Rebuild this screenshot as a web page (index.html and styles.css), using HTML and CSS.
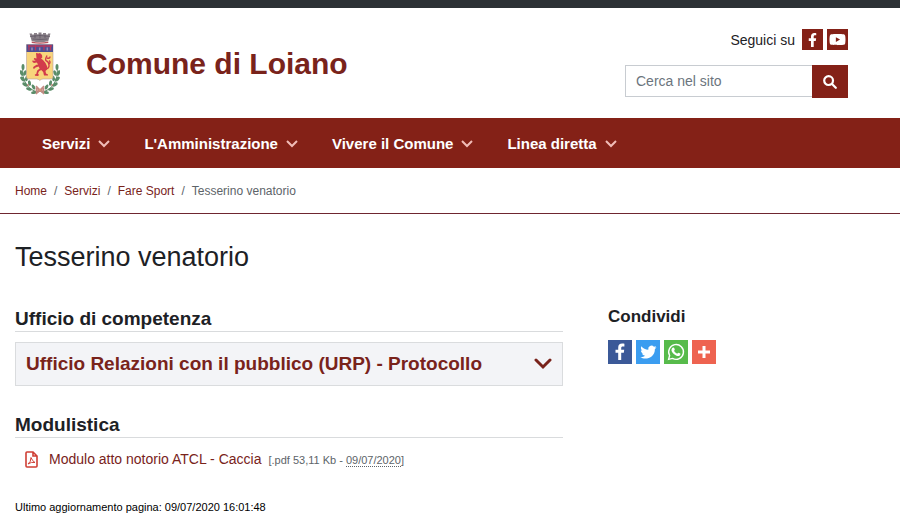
FILE: index.html
```html
<!DOCTYPE html>
<html lang="it">
<head>
<meta charset="utf-8">
<meta name="viewport" content="width=device-width, initial-scale=1">
<title>Tesserino venatorio - Comune di Loiano</title>
<link rel="stylesheet" href="styles.css">
</head>
<body>
<div class="topbar"></div>
<header class="header">
  <a class="brand" href="#">
    <svg class="crest" viewBox="0 0 40 64" aria-hidden="true">
      <g fill="none" stroke="#5d8a68" stroke-width="1">
        <path d="M3 35C1 48 8 59 19 60M37 35C39 48 32 59 21 60"/>
      </g>
      <g fill="#5a8d69">
        <ellipse cx="3" cy="35" rx="1.5" ry="3"/><ellipse cx="1.6" cy="41" rx="1.6" ry="3" transform="rotate(-25 1.6 41)"/>
        <ellipse cx="5" cy="41" rx="1.5" ry="2.8" transform="rotate(25 5 41)"/><ellipse cx="2.6" cy="47" rx="1.6" ry="3" transform="rotate(-45 2.6 47)"/>
        <ellipse cx="6.5" cy="46.5" rx="1.5" ry="2.8" transform="rotate(10 6.5 46.5)"/><ellipse cx="5" cy="52.5" rx="1.6" ry="3" transform="rotate(-60 5 52.5)"/>
        <ellipse cx="9.5" cy="51" rx="1.5" ry="2.8" transform="rotate(-10 9.5 51)"/><ellipse cx="9" cy="57" rx="1.6" ry="3" transform="rotate(-75 9 57)"/>
        <ellipse cx="13.5" cy="55" rx="1.5" ry="2.8" transform="rotate(-30 13.5 55)"/><ellipse cx="14" cy="60.5" rx="1.5" ry="3" transform="rotate(80 14 60.5)"/>
        <ellipse cx="37" cy="35" rx="1.5" ry="3"/><ellipse cx="38.4" cy="41" rx="1.6" ry="3" transform="rotate(25 38.4 41)"/>
        <ellipse cx="35" cy="41" rx="1.5" ry="2.8" transform="rotate(-25 35 41)"/><ellipse cx="37.4" cy="47" rx="1.6" ry="3" transform="rotate(45 37.4 47)"/>
        <ellipse cx="33.5" cy="46.5" rx="1.5" ry="2.8" transform="rotate(-10 33.5 46.5)"/><ellipse cx="35" cy="52.5" rx="1.6" ry="3" transform="rotate(60 35 52.5)"/>
        <ellipse cx="30.5" cy="51" rx="1.5" ry="2.8" transform="rotate(10 30.5 51)"/><ellipse cx="31" cy="57" rx="1.6" ry="3" transform="rotate(75 31 57)"/>
        <ellipse cx="26.5" cy="55" rx="1.5" ry="2.8" transform="rotate(30 26.5 55)"/><ellipse cx="26" cy="60.5" rx="1.5" ry="3" transform="rotate(-80 26 60.5)"/>
      </g>
      <path d="M6.500 12.500h26.500v32.500q0 2-2 2h-8q-2 0-3.200 1.500Q18.500 47 16.500 47h-8q-2 0-2-2z" fill="#f8d57c" stroke="#b9a0a0" stroke-width=".6"/>
      <path d="M6.500 12.500h26.500v7.500H6.500z" fill="#4c4f94"/>
      <path d="M8 14h24M9 13v5.500M15.500 13v5.500M24 13v5.500M30.500 13v5.500" stroke="#b6385c" stroke-width="1.3" fill="none"/>
      <path d="M12 15.500v3M19.700 15.500v3M27.300 15.500v3" stroke="#9889b4" stroke-width="1.5"/>
      <path d="M9.500 1.500h2.500v1h2v-1.500h3v1.300h1.500V.5h3v1.800H23V1h3v1.500h2v-1h2.500l-2.200 7.500Q20 11.500 11.700 9z" fill="#898088"/>
      <path d="M10 4.500q10-2 20 0M12.500 7q7.500 1 15 0M15 3v3M20 2.500v4M25 3v3" stroke="#5b5360" fill="none" stroke-width=".7"/>
      <path d="M11.700 9.500q8.300 2 16.600 0v1.500q-8.300 1.500-16.600 0z" fill="#b8555d"/>
      <path d="M16 21l2.500.5 1.500-.5 2 2 .3 2.500-1.300 1 2 1.500 2.500 3 1.700 3.500-.2 3-1.500 1.500.5 2.500 2 1v1h-4l-.8-3.500-2-2-2.200 1.300-1 2.200 1 1.500-1 1-3-.3-.2-1.200 1.400-.5 1-3.500 2.500-2-1.200-2-3 1-1.500 1.500-1-1 .5-1.300 3-2 1.700-.2-1.500-2-2.700.5-1.500-1-.2-1.500 1.700.2 1.700-.2-2-1.200.5-1.300 2.300.5z" fill="#d23b4b"/>
      <path d="M25.500 37q4-.5 3.500-4t-2.500-4 .5-5.500M29 32q2-2 0-3.500M27 26q3 1 3-1.500" fill="none" stroke="#d23b4b" stroke-width="1.4"/>
      <path d="M16 54l8 8M24 54l-8 8M16.500 55.500v5M23.500 55.500v5M17 58h6" stroke="#c58b83" stroke-width="1.5" fill="none"/>
      <circle cx="8" cy="53" r=".8" fill="#c85a58"/><circle cx="32" cy="53" r=".8" fill="#c85a58"/><circle cx="20" cy="58" r="1" fill="#d9a373"/>
    </svg>
    <span class="brand-name">Comune di Loiano</span>
  </a>
  <div class="tools">
    <div class="follow">
      <span>Seguici su</span>
      <a class="follow-link" href="#" aria-label="Facebook"><svg viewBox="0 0 320 512" class="ico-fb"><path d="M279 288l14-93h-89v-60c0-25 12-50 52-50h41V7s-37-7-72-7c-73 0-121 44-121 125v70H23v93h81v224h100V288z"/></svg></a>
      <a class="follow-link" href="#" aria-label="YouTube"><svg viewBox="0 0 576 512" class="ico-yt"><path fill-rule="evenodd" d="M550 124c-7-24-25-42-49-49C458 64 288 64 288 64S118 64 75 75c-24 7-42 25-49 49-11 43-11 132-11 132s0 90 11 133c7 24 25 41 49 48 43 11 213 11 213 11s170 0 213-11c24-7 42-24 49-48 11-43 11-133 11-133s0-89-11-132zM232 338V175l143 81z"/></svg></a>
    </div>
    <form class="search">
      <input type="search" class="search-input" placeholder="Cerca nel sito" aria-label="Cerca nel sito">
      <button type="button" class="search-button" aria-label="Cerca"><svg viewBox="0 0 14 14" class="ico-search"><circle cx="5.600" cy="5.600" r="4.400"/><path d="M9 9l3.800 3.800"/></svg></button>
    </form>
  </div>
</header>
<nav class="nav" aria-label="Menu principale">
  <button type="button" class="nav-item">Servizi<svg class="caret" viewBox="0 0 12 8"><path d="M1 1l5 5 5-5"/></svg></button>
  <button type="button" class="nav-item">L'Amministrazione<svg class="caret" viewBox="0 0 12 8"><path d="M1 1l5 5 5-5"/></svg></button>
  <button type="button" class="nav-item">Vivere il Comune<svg class="caret" viewBox="0 0 12 8"><path d="M1 1l5 5 5-5"/></svg></button>
  <button type="button" class="nav-item">Linea diretta<svg class="caret" viewBox="0 0 12 8"><path d="M1 1l5 5 5-5"/></svg></button>
</nav>
<nav aria-label="Percorso">
  <ol class="crumbs">
    <li><a href="#">Home</a></li>
    <li><a href="#">Servizi</a></li>
    <li><a href="#">Fare Sport</a></li>
    <li aria-current="page">Tesserino venatorio</li>
  </ol>
</nav>
<main class="main">
  <h1 class="title">Tesserino venatorio</h1>
  <div class="columns">
    <div>
      <section class="section">
        <h2 class="heading">Ufficio di competenza</h2>
        <button type="button" class="office" aria-expanded="false">Ufficio Relazioni con il pubblico (URP) - Protocollo<svg class="chevron" viewBox="0 0 18 12"><path d="M2 2l7 7 7-7"/></svg></button>
      </section>
      <section class="section">
        <h2 class="heading">Modulistica</h2>
        <div class="file">
          <svg class="ico-pdf" viewBox="0 0 13 17" aria-hidden="true"><path d="M1 2q0-1 1-1h6l4 4v10q0 1-1 1H2q-1 0-1-1zM8 1v4h4"/><path class="thin" d="M6 6.500q1.200 3.500 4 5-3.500-1-7 1.500 3-2 3-6.500z"/></svg>
          <a href="#">Modulo atto notorio ATCL - Caccia</a>
          <span class="meta">[.pdf 53,11 Kb - <abbr title="Data di pubblicazione">09/07/2020</abbr>]</span>
        </div>
      </section>
    </div>
    <aside>
      <h2 class="share-title">Condividi</h2>
      <div class="share">
        <a class="share-link fb" href="#" aria-label="Facebook"><svg viewBox="0 0 24 24"><path d="M15.800 12.800l.4-3h-3V8c0-.9.400-1.500 1.600-1.500h1.600V3.800c-.6-.1-1.300-.2-2.200-.2-2.600 0-4 1.500-4 4.100v2.100H7.500v3h2.700V20h3v-7.200z"/></svg></a>
        <a class="share-link tw" href="#" aria-label="Twitter"><svg viewBox="0 0 24 24"><path d="M20.500 7.200c-.6.300-1.200.500-1.900.5.700-.4 1.200-1 1.400-1.800-.6.400-1.300.6-2.100.8a3.300 3.300 0 0 0-5.600 3C9.500 9.600 7 8.300 5.400 6.200c-.9 1.500-.5 3.400 1 4.400-.5 0-1-.2-1.500-.4 0 1.600 1.100 3 2.700 3.300-.5.100-1 .1-1.500 0 .4 1.300 1.600 2.200 3.100 2.300a6.600 6.600 0 0 1-4.900 1.400c5.400 3.300 14.700.5 14.600-8.300.7-.4 1.200-1 1.600-1.700z"/></svg></a>
        <a class="share-link wa" href="#" aria-label="WhatsApp"><svg viewBox="0 0 24 24"><path class="ring" d="M4.600 19.400l1-3.900a7.400 7.400 0 1 1 2.900 2.900z"/><path d="M9.100 7.600c.5-.2 1 0 1.100.4l.6 1.500c.1.500-.8 1-.6 1.400.7 1.300 1.600 2.100 3 2.700.4.200.9-1.100 1.400-.9l1.600.8c.4.200.2 1.200-.2 1.700-.7.800-1.900 1-3 .7-2.500-.8-4.300-2.400-5.300-4.600-.6-1.300.1-3.300 1.400-3.700z"/></svg></a>
        <a class="share-link more" href="#" aria-label="Altri servizi"><svg viewBox="0 0 24 24"><path d="M10.500 6h3v4.500H18v3h-4.500V18h-3v-4.500H6v-3h4.500z"/></svg></a>
      </div>
    </aside>
  </div>
  <p class="updated">Ultimo aggiornamento pagina: 09/07/2020 16:01:48</p>
</main>
</body>
</html>
```
FILE: styles.css
```css
* {
  box-sizing: border-box;
}

body {
  margin: 0;
  background: #fff;
  color: #1d2125;
  font: 14px/20px "Liberation Sans", Arial, sans-serif;
}

a {
  color: #79231b;
  text-decoration: none;
}

button {
  border: 0;
  font-family: inherit;
  cursor: pointer;
}

svg {
  display: block;
  flex: none;
}

.topbar {
  height: 8px;
  background: #2c3135;
}

.header {
  display: flex;
  justify-content: space-between;
  padding: 21px 52px 20px 20px;
}

.brand {
  display: flex;
  align-items: center;
  gap: 26px;
}

.crest {
  width: 40px;
  height: 64px;
}

.brand-name {
  font-size: 30px;
  font-weight: bold;
  line-height: 36px;
}

.tools {
  display: flex;
  flex-direction: column;
  align-items: flex-end;
  gap: 15px;
}

.follow {
  display: flex;
  align-items: center;
  gap: 4px;
}

.follow span {
  margin-right: 3px;
}

.follow-link {
  display: flex;
  align-items: center;
  justify-content: center;
  width: 21px;
  height: 21px;
  background: #842117;
  fill: #fff;
}

.ico-fb {
  width: 9px;
  height: 14px;
}

.ico-yt {
  width: 17px;
  height: 15px;
}

.search {
  display: flex;
}

.search-input {
  width: 187px;
  height: 32px;
  padding: 0 10px;
  border: 1px solid #c8ccd1;
  border-right: 0;
  border-radius: 0;
  background: #fff;
  font: inherit;
}

.search-input::placeholder {
  color: #6c757d;
  opacity: 1;
}

.search-button {
  display: flex;
  align-items: center;
  justify-content: center;
  width: 36px;
  height: 33px;
  padding: 0;
  background: #842117;
}

.ico-search {
  width: 14px;
  height: 14px;
  fill: none;
  stroke: #fff;
  stroke-width: 2.2;
  stroke-linecap: round;
}

.nav {
  display: flex;
  gap: 34px;
  padding: 0 42px;
  background: #842117;
}

.nav-item {
  display: flex;
  align-items: center;
  gap: 8px;
  padding: 16px 0 14px;
  background: none;
  color: #fff;
  font-size: 15px;
  font-weight: bold;
  line-height: 20px;
}

.caret {
  width: 12px;
  height: 8px;
  fill: none;
  stroke: #f0bcb7;
  stroke-width: 2;
}

.crumbs {
  display: flex;
  margin: 0;
  padding: 13px 15px 12px;
  border-bottom: 1px solid #6f2630;
  color: #5d6469;
  font-size: 12px;
  list-style: none;
}

.crumbs li + li::before {
  content: "/";
  padding: 0 7px;
}

.main {
  padding: 26px 52px 14px 15px;
}

.title {
  margin: 0 0 33px;
  font-size: 27px;
  font-weight: normal;
  line-height: 34px;
}

.columns {
  display: grid;
  grid-template-columns: 548fr 240fr;
  gap: 45px;
}

.section {
  margin-bottom: 27px;
}

.heading {
  margin: 0 0 10px;
  border-bottom: 1px solid #d9dbdd;
  font-size: 19px;
  line-height: 24px;
}

.office {
  display: flex;
  align-items: center;
  justify-content: space-between;
  width: 100%;
  padding: 9px 10px;
  border: 1px solid #dadcde;
  background: #f3f4f7;
  color: #79231b;
  font-size: 19px;
  font-weight: bold;
  line-height: 24px;
  text-align: left;
}

.chevron {
  width: 18px;
  height: 12px;
  fill: none;
  stroke: #79231b;
  stroke-width: 3;
  stroke-linecap: round;
}

.file {
  display: flex;
  align-items: center;
  padding-left: 10px;
}

.ico-pdf {
  width: 13px;
  height: 17px;
  margin-right: 11px;
  fill: none;
  stroke: #cf3f35;
  stroke-width: 1.6;
}

.ico-pdf .thin {
  stroke-width: 1;
}

.meta {
  margin-left: 7px;
  padding-top: 2px;
  color: #5d6469;
  font-size: 11px;
}

.meta abbr {
  border-bottom: 1px dotted #5d6469;
  text-decoration: none;
}

.share-title {
  margin: 0 0 13px;
  font-size: 17px;
  line-height: 20px;
}

.share {
  display: flex;
  gap: 4px;
}

.share-link {
  width: 24px;
  height: 24px;
  fill: #fff;
}

.share-link.fb {
  background: #3b5998;
}

.share-link.tw {
  background: #3b9df0;
}

.share-link.wa {
  background: #57bb4b;
}

.share-link.more {
  background: #ee6350;
}

.ring {
  fill: none;
  stroke: #fff;
  stroke-width: 1.4;
}

.updated {
  margin: 0;
  color: #000;
  font-size: 11px;
}
```
